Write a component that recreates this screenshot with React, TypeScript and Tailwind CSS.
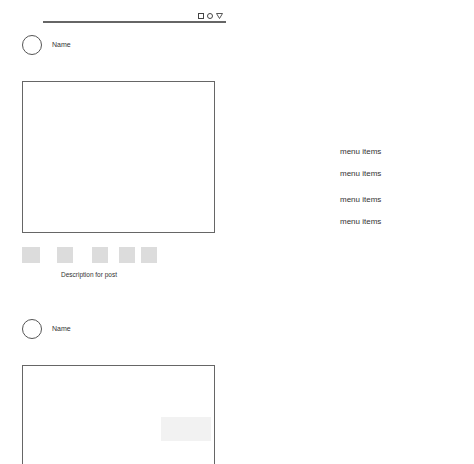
import React from "react";

function Post({ variant }: { variant: 1 | 2 }) {
  return (
    <div className="flex flex-col">
      <div className="flex items-center">
        <div className="w-[20px] h-[20px] rounded-full border border-[#555]" />
        <span className="ml-[10px] text-[7px] leading-[8px] text-[#333]">Name</span>
      </div>
      <div className="mt-[26px] w-[193px] h-[152px] border border-[#666] flex justify-end">
        {variant === 2 && (
          <div className="mt-[51px] mr-[3px] w-[50px] h-[24px] bg-[#f2f2f2]" />
        )}
      </div>
      {variant === 1 && (
        <>
          <div className="mt-[14px] flex">
            <div className="w-[18px] h-[16px] bg-[#dcdcdc]" />
            <div className="ml-[17px] w-[16px] h-[16px] bg-[#dcdcdc]" />
            <div className="ml-[19px] w-[16px] h-[16px] bg-[#dcdcdc]" />
            <div className="ml-[11px] w-[16px] h-[16px] bg-[#dcdcdc]" />
            <div className="ml-[6px] w-[16px] h-[16px] bg-[#dcdcdc]" />
          </div>
          <div className="mt-[8px] ml-[39px] text-[6.5px] leading-[8px] text-[#333]">
            Description for post
          </div>
        </>
      )}
    </div>
  );
}

export default function App() {
  return (
    <div
      className="relative w-[474px] h-[464px] overflow-hidden bg-white flex antialiased"
      style={{ fontFamily: "'Liberation Sans', Arial, sans-serif" }}
    >
      <div className="pl-[22px] w-[300px] flex flex-col">
        <div className="ml-[21px] w-[183px] mt-[12px]">
          <div className="flex justify-end items-center gap-[3px] pr-[3px] h-[8px]">
            <div className="w-[6px] h-[6px] border border-[#444]" />
            <div className="w-[6px] h-[6px] rounded-full border border-[#444]" />
            <svg width="7" height="6" viewBox="0 0 7 6">
              <path d="M0.5 0.5 H6.5 L3.5 5.5 Z" fill="none" stroke="#444" strokeWidth="0.9" />
            </svg>
          </div>
          <div className="mt-[1px] h-[1.5px] bg-[#666]" />
        </div>
        <div className="mt-[12px]">
          <Post variant={1} />
        </div>
        <div className="mt-[40px]">
          <Post variant={2} />
        </div>
      </div>
      <div className="ml-[40px] mt-[147px] flex flex-col text-[8px] leading-[10px] text-[#333]">
        <span>menu items</span>
        <span className="mt-[12px]">menu items</span>
        <span className="mt-[16px]">menu items</span>
        <span className="mt-[12px]">menu items</span>
      </div>
    </div>
  );
}
